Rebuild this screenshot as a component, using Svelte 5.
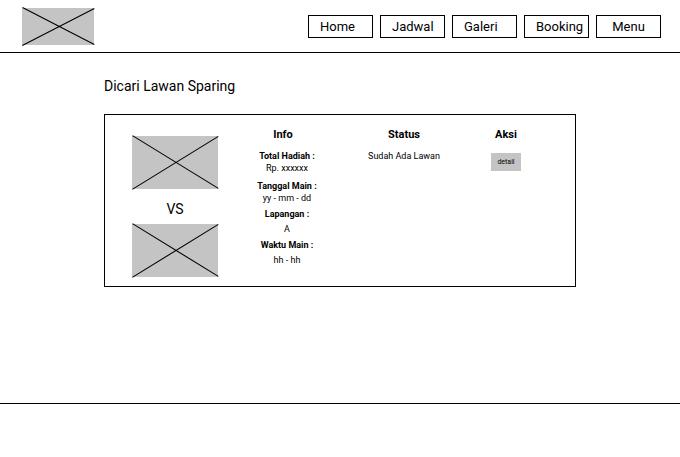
<script>
  const links = ['Home', 'Jadwal', 'Galeri', 'Booking', 'Menu'];
  const info = [
    { label: 'Total Hadiah :', value: 'Rp. xxxxxx' },
    { label: 'Tanggal Main :', value: 'yy - mm - dd' },
    { label: 'Lapangan :', value: 'A', loose: true },
    { label: 'Waktu Main :', value: 'hh - hh', loose: true }
  ];
</script>

{#snippet placeholder(w, h, label)}
  <svg class="placeholder" width={w} height={h} viewBox="0 0 {w} {h}" role="img" aria-label={label}>
    <rect width={w} height={h} fill="#c4c4c4" />
    <path d="M0.5 -0.4L{w + 0.3} {h - 0.6}M0.3 {h + 0.4}L{w + 0.3} 0.4" stroke="#000" stroke-width="1.1" fill="none" />
  </svg>
{/snippet}

<div class="page">
  <header>
    {@render placeholder(72, 37, 'Logo')}
    <nav>
      {#each links as link}
        <a href="#{link.toLowerCase()}" class:centered={link === 'Menu'}>{link}</a>
      {/each}
    </nav>
  </header>

  <main>
    <h1>Dicari Lawan Sparing</h1>
    <article>
      <div class="teams">
        {@render placeholder(86, 53, 'Tim 1')}
        <span>VS</span>
        {@render placeholder(86, 53, 'Tim 2')}
      </div>
      <section>
        <h2>Info</h2>
        <dl>
          {#each info as item}
            <div class:loose={item.loose}>
              <dt>{item.label}</dt>
              <dd>{item.value}</dd>
            </div>
          {/each}
        </dl>
      </section>
      <section>
        <h2>Status</h2>
        <p>Sudah Ada Lawan</p>
      </section>
      <section>
        <h2>Aksi</h2>
        <button type="button">detail</button>
      </section>
    </article>
  </main>

  <footer></footer>
</div>

<style>
  .page {
    min-height: 100vh;
    display: flex;
    flex-direction: column;
    background: #fff;
    color: #000;
    font-family: Roboto, sans-serif;
  }
  header {
    display: flex;
    align-items: center;
    justify-content: space-between;
    padding: 8px 19px 7px 22px;
    border-bottom: 1px solid #000;
  }
  .placeholder {
    display: block;
    overflow: visible;
  }
  nav {
    display: flex;
    gap: 7px;
  }
  nav a {
    box-sizing: border-box;
    width: 65px;
    padding: 0 0 0 11px;
    border: 1px solid #000;
    color: #000;
    font-size: 13px;
    line-height: 21px;
    text-decoration: none;
  }
  nav a.centered {
    padding: 0;
    text-align: center;
  }
  main {
    flex: 1;
    padding: 25px 104px;
  }
  h1 {
    margin: 0 0 20px;
    font-size: 14px;
    font-weight: 400;
    line-height: 16px;
  }
  article {
    display: grid;
    grid-template-columns: 86px 130fr 112fr 92fr;
    padding: 13px 23px 9px 27px;
    border: 1px solid #000;
  }
  .teams {
    display: flex;
    flex-direction: column;
    align-items: center;
    padding-top: 8px;
  }
  .teams span {
    margin: 12px 0 7px;
    font-size: 14px;
    line-height: 16px;
  }
  section {
    display: flex;
    flex-direction: column;
    align-items: center;
    font-size: 9px;
    line-height: 12px;
    text-align: center;
  }
  h2 {
    margin: 0 0 8px;
    font-size: 11px;
    font-weight: 700;
    line-height: 14px;
  }
  dl {
    display: flex;
    flex-direction: column;
    gap: 4px;
    margin: 0;
    padding-left: 8px;
  }
  dl div:first-child {
    padding-bottom: 2px;
  }
  dt {
    font-weight: 700;
  }
  dd,
  p {
    margin: 0;
  }
  .loose dd {
    margin-top: 3px;
  }
  button {
    width: 30px;
    height: 18px;
    margin: 3px 0 0;
    padding: 0;
    border: 0;
    background: #c4c4c4;
    color: #000;
    font: 7px Roboto, sans-serif;
  }
  footer {
    height: 53px;
    border-top: 1px solid #000;
  }
</style>
